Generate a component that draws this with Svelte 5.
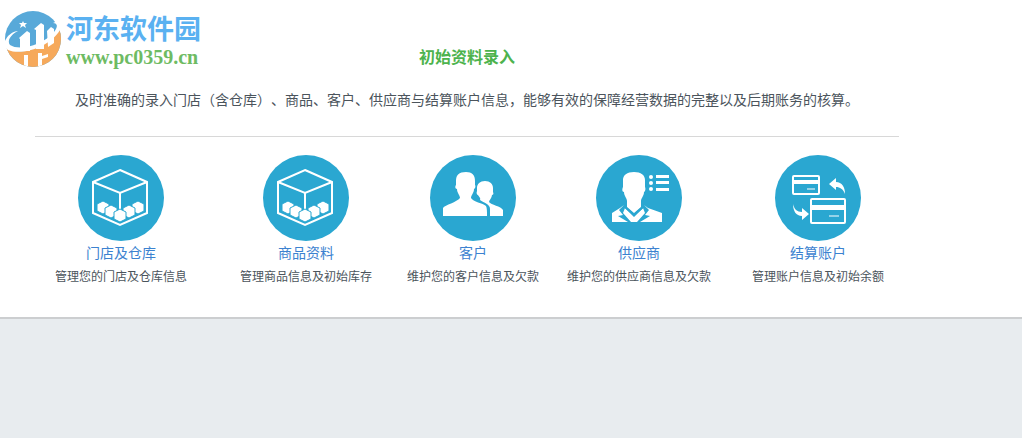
<script>
  const items = [
    { icon: 'box', name: '门店及仓库', text: '管理您的门店及仓库信息' },
    { icon: 'box', name: '商品资料', text: '管理商品信息及初始库存' },
    { icon: 'clients', name: '客户', text: '维护您的客户信息及欠款' },
    { icon: 'supplier', name: '供应商', text: '维护您的供应商信息及欠款' },
    { icon: 'account', name: '结算账户', text: '管理账户信息及初始余额' }
  ];

  // centres of the small crates, back to front
  const crates = [[32, 59], [67, 59], [40, 63], [58, 63], [49, 67]];
</script>

<main>
  <div class="brand">
    <svg class="logo" viewBox="0 0 66 66" aria-hidden="true">
      <defs>
        <clipPath id="disc"><circle cx="33" cy="34" r="28" /></clipPath>
      </defs>
      <g clip-path="url(#disc)">
        <rect width="66" height="66" fill="#58a9d9" />
        <path d="M0 40C20 54 46 44 64 20V66H0Z" fill="#f6a95b" />
        <path d="M19 33L27 26L30 28V46H20V34ZM34 24L41 18L44 20V44H36V25ZM47 26L51 22L54 24V38L48 42Z" fill="#fff" />
        <path d="M24 50H28V66H24ZM38 48H42V66H38ZM42 51L48 49V52L42 54Z" fill="#fff" />
        <path d="M23 16L24 18L27 18L25 20L26 23L23 21L20 23L21 20L19 18L22 18Z" fill="#fff" />
      </g>
      <path d="M18 26C10 30 7 36 10 40C19 46 42 41 54 27C58 22 58 18 53 18C59 15 63 18 60 25C50 42 22 51 8 45C0 39 8 27 18 26Z" fill="#fff" />
    </svg>
    <div class="brand-text">
      <span class="brand-name">河东软件园</span>
      <span class="brand-url">www.pc0359.cn</span>
    </div>
  </div>

  <section>
    <h1>初始资料录入</h1>
    <p class="intro">及时准确的录入门店（含仓库）、商品、客户、供应商与结算账户信息，能够有效的保障经营数据的完整以及后期账务的核算。</p>

    <ul>
      {#each items as item}
        <li>
          <svg class="icon" viewBox="7 7 86 86" aria-hidden="true">
            {#if item.icon === 'box'}
              <path class="line" d="M49 22L76 34V65L49 77L22 65V34ZM22 34L49 45L76 34M49 45V62" />
              {#each crates as [x, y]}
                <path class="crate" d="M{x} {y - 6}L{x + 6} {y - 3}V{y + 4}L{x} {y + 7}L{x - 6} {y + 4}V{y - 3}Z" />
              {/each}
            {:else if item.icon === 'clients'}
              <path d="M43 24C49 24 52 27 52 33V37C53 38 52 41 51 41C51 45 48 47 48 50C50 54 60 55 63 58C64 60 64 63 64 68H20V60C22 57 34 54 37 50C37 47 34 45 34 41C32 41 32 38 33 37V33C33 27 36 24 43 24Z" />
              <path d="M62 33C67 33 70 36 70 40V44C71 46 70 47 69 47C69 50 66 52 66 54C68 57 78 58 80 62V68H67V61C67 56 61 55 57 52C58 50 56 49 55 47C54 47 53 45 54 43V40C54 36 57 33 62 33Z" />
            {:else if item.icon === 'supplier'}
              <path d="M45 24C52 24 56 27 56 32V39C57 41 56 44 55 44C55 48 52 50 52 53V59L45 65L38 59V53C38 50 35 48 35 44C33 44 33 41 34 39V32C34 27 38 24 45 24Z" />
              <path d="M35 57L31 60L23 65V74H39L29 68L34 67L30 62ZM55 57L59 60L73 65V74H51L61 68L56 67L60 62ZM36 60L34 65L42 74H48L56 65L54 60L45 69Z" />
              <path class="cut" d="M36 59L45 67L54 59" />
              <circle cx="62" cy="29" r="2" />
              <circle cx="62" cy="35" r="2" />
              <circle cx="62" cy="41" r="2" />
              <path d="M67 27H80V30H67ZM67 33H80V36H67ZM67 40H80V43H67Z" />
            {:else}
              <rect class="line" x="25" y="28" width="26" height="18" rx="1" />
              <path d="M25 32H51V36H25Z" />
              <path class="thin" d="M39 41H47" />
              <rect class="line" x="43" y="51" width="34" height="24" rx="1" />
              <path d="M43 57H77V62H43Z" />
              <path class="thin" d="M61 68H71" />
              <path d="M61 36L68 30V34C74 34 77 39 77 46C75 41 72 39 68 39V42ZM25 56C26 61 29 64 34 64V60L41 66L34 72V68C28 68 25 63 25 56Z" />
            {/if}
          </svg>
          <a href="#{item.name}">{item.name}</a>
          <span class="note">{item.text}</span>
        </li>
      {/each}
    </ul>
  </section>
</main>

<style>
  :global(body) {
    margin: 0;
    background: #e8ecef;
  }

  main {
    position: relative;
    padding: 42px 35px 28px;
    background: #fff;
    border-bottom: 2px solid #ccced0;
    font-family: "Noto Sans CJK SC", sans-serif;
    color: #4b545c;
  }

  /* Sits over the top left corner of the panel */
  .brand {
    position: absolute;
    top: 5px;
    left: 0;
    display: flex;
  }

  .logo {
    width: 66px;
    height: 66px;
  }

  .brand-text {
    display: flex;
    flex-direction: column;
    padding-top: 6px;
    font-weight: bold;
    white-space: nowrap;
  }

  .brand-name {
    font-size: 27px;
    line-height: 34px;
    color: #5ab1f1;
  }

  .brand-url {
    font-family: "Liberation Serif", serif;
    font-size: 20px;
    line-height: 24px;
    color: #6ebb63;
  }

  section {
    max-width: 864px;
  }

  h1 {
    margin: 0;
    font-size: 16px;
    line-height: 28px;
    text-align: center;
    color: #4db34d;
  }

  .intro {
    margin: 0;
    padding: 18px 0 26px;
    border-bottom: 1px solid #d8d8d8;
    font-size: 14px;
    line-height: 22px;
    text-align: center;
    text-spacing-trim: space-all;
  }

  ul {
    display: grid;
    grid-template-columns: 172fr 198fr 136fr 196fr 162fr;
    margin: 0;
    padding: 18px 0 0;
    list-style: none;
  }

  li {
    display: flex;
    flex-direction: column;
    align-items: center;
    min-width: 0;
    white-space: nowrap;
  }

  .icon {
    width: 86px;
    height: 86px;
    border-radius: 50%;
    background: #2aa7d1;
    fill: #fff;
  }

  .line,
  .thin,
  .cut {
    fill: none;
    stroke: #fff;
    stroke-width: 2;
  }

  .thin {
    stroke-width: 1;
  }

  .cut {
    stroke: #2aa7d1;
  }

  .crate {
    stroke: #2aa7d1;
    stroke-width: 1;
  }

  a {
    font-size: 14px;
    line-height: 22px;
    color: #3c82d0;
    text-decoration: none;
  }

  .note {
    font-size: 12px;
    line-height: 26px;
  }
</style>
